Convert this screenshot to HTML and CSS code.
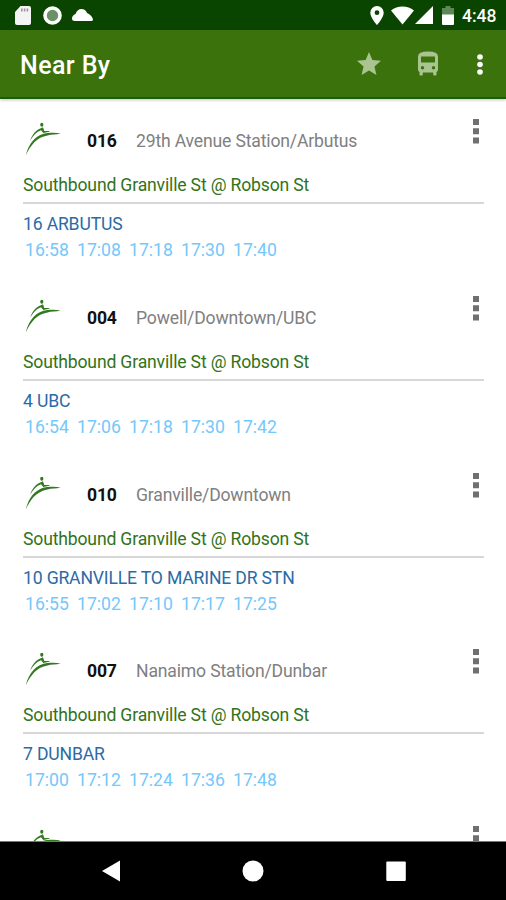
FILE: index.html
```
<!DOCTYPE html>
<html lang="en">
<head>
    <meta charset="UTF-8">
    <title>Near By</title>
    <link rel="stylesheet" href="styles.css">
</head>
<body>
    <!-- shared icons -->
    <svg class="sprite">
        <symbol id="logo" viewBox="0 0 40 40">
            <ellipse cx="17.8" cy="5.8" rx="1.6" ry="2"/>
            <path d="M6.2 21.5C8 15.8 12.3 10.8 16.8 9.2L19 8.3L20.3 12L25.6 11.9L25.2 12.8L19.3 13.9L17 11.3C12.5 13 9.4 16.3 6.2 21.5Z"/>
            <path d="M1.8 36.5C4.6 24.500 12.300 14.900 23.500 14.100C28.500 13.500 33 13.700 36.600 14.600C32 15.900 27 15.500 23.500 16.500C13 18.300 6.800 25.700 1.800 36.500Z"/>
        </symbol>
        <symbol id="dots" viewBox="0 0 6 25">
            <path d="M0 0h6v6H0zM0 9.2h6v6H0zM0 18.5h6v6H0z"/>
        </symbol>
    </svg>

    <div class="screen">
        <div class="status-bar">
            <div class="status-group">
                <svg class="icon-sd" viewBox="0 0 16 19">
                    <path d="M5.5 0H14q2 0 2 2v15q0 2-2 2H2q-2 0-2-2V6z" fill="#f4f4f4"/>
                    <path d="M6 2.5h1.6v3H6zM8.8 2.5h1.6v3H8.8zM11.6 2.5h1.6v3h-1.6z" fill="#9a9a9a"/>
                </svg>
                <svg class="icon-record" viewBox="0 0 19 19">
                    <circle cx="9.5" cy="9.5" r="7.5" fill="#6c9169" stroke="#fff" stroke-width="3.6"/>
                </svg>
                <svg class="icon-cloud" viewBox="0 0 21 12">
                    <path d="M3 12Q0 12 0 9.5Q0 6.5 3.5 5Q5.5 0 9.5 0Q13.5 0 15 4Q20 6 21 10.5Q21 12 19 12z" fill="#fff"/>
                </svg>
            </div>
            <div class="status-group">
                <svg class="icon-pin" viewBox="0 0 14 19">
                    <path d="M7 0a6.7 6.7 0 0 0-6.7 6.7C.3 11.7 7 19 7 19s6.700-7.300 6.700-12.300A6.700 6.700 0 0 0 7 0zm0 4.300a2.400 2.400 0 1 1 0 4.800a2.400 2.400 0 0 1 0-4.800z" fill="#fff" fill-rule="evenodd"/>
                </svg>
                <svg class="icon-wifi" viewBox="0 0 24 19">
                    <path d="M12 19L0 4.2Q5.2 0 12 0t12 4.2z" fill="#fff"/>
                </svg>
                <svg class="icon-signal" viewBox="0 0 18 18">
                    <path d="M18 0v18H0z" fill="#fff"/>
                </svg>
                <svg class="icon-battery" viewBox="0 0 12 19">
                    <path d="M3.5 0h5v2H12v7H0V2h3.5z" fill="#5c8756"/>
                    <path d="M0 8.5h12V18q0 1-1 1H1q-1 0-1-1z" fill="#fff"/>
                </svg>
                <span class="clock">4:48</span>
            </div>
        </div>

        <div class="app-bar">
            <h1 class="title">Near By</h1>
            <svg class="icon-star" viewBox="2 2 20 19">
                <path d="M12 17.27L18.18 21l-1.64-7.03L22 9.24l-7.19-.61L12 2 9.19 8.63 2 9.24l5.46 4.73L5.82 21z"/>
            </svg>
            <svg class="icon-bus" viewBox="0 0 22 24">
                <path fill-rule="evenodd" d="M1 5Q1 0 11 0t10 5v13q0 1.6-1.5 2.6V23q0 1-1 1h-1.3q-1 0-1-1v-2H5.8v2q0 1-1 1H3.5q-1 0-1-1v-2.4Q1 19.6 1 18zM4 5v6h14V5zM5.5 14.5a1.7 1.7 0 1 0 0 3.4a1.7 1.7 0 0 0 0-3.4zM16.5 14.5a1.7 1.7 0 1 0 0 3.4a1.7 1.7 0 0 0 0-3.4z"/>
            </svg>
            <svg class="icon-more" viewBox="0 0 6 21">
                <circle cx="3" cy="3" r="2.8"/>
                <circle cx="3" cy="10.5" r="2.8"/>
                <circle cx="3" cy="18" r="2.8"/>
            </svg>
        </div>

        <div class="list">
            <div class="card">
                <div class="card-header">
                    <svg class="logo"><use href="#logo"/></svg>
                    <span class="number">016</span>
                    <span class="name">29th Avenue Station/Arbutus</span>
                    <svg class="menu"><use href="#dots"/></svg>
                </div>
                <div class="stop">Southbound Granville St @ Robson St</div>
                <div class="route">16 ARBUTUS</div>
                <div class="times"><span>16:58</span><span>17:08</span><span>17:18</span><span>17:30</span><span>17:40</span></div>
            </div>

            <div class="card">
                <div class="card-header">
                    <svg class="logo"><use href="#logo"/></svg>
                    <span class="number">004</span>
                    <span class="name">Powell/Downtown/UBC</span>
                    <svg class="menu"><use href="#dots"/></svg>
                </div>
                <div class="stop">Southbound Granville St @ Robson St</div>
                <div class="route">4 UBC</div>
                <div class="times"><span>16:54</span><span>17:06</span><span>17:18</span><span>17:30</span><span>17:42</span></div>
            </div>

            <div class="card">
                <div class="card-header">
                    <svg class="logo"><use href="#logo"/></svg>
                    <span class="number">010</span>
                    <span class="name">Granville/Downtown</span>
                    <svg class="menu"><use href="#dots"/></svg>
                </div>
                <div class="stop">Southbound Granville St @ Robson St</div>
                <div class="route">10 GRANVILLE TO MARINE DR STN</div>
                <div class="times"><span>16:55</span><span>17:02</span><span>17:10</span><span>17:17</span><span>17:25</span></div>
            </div>

            <div class="card">
                <div class="card-header">
                    <svg class="logo"><use href="#logo"/></svg>
                    <span class="number">007</span>
                    <span class="name">Nanaimo Station/Dunbar</span>
                    <svg class="menu"><use href="#dots"/></svg>
                </div>
                <div class="stop">Southbound Granville St @ Robson St</div>
                <div class="route">7 DUNBAR</div>
                <div class="times"><span>17:00</span><span>17:12</span><span>17:24</span><span>17:36</span><span>17:48</span></div>
            </div>

            <div class="card">
                <div class="card-header">
                    <svg class="logo"><use href="#logo"/></svg>
                    <svg class="menu"><use href="#dots"/></svg>
                </div>
            </div>
        </div>

        <div class="nav-bar">
            <svg viewBox="0 0 22 22"><path d="M20 .5v21L2 11z"/></svg>
            <svg viewBox="0 0 22 22"><circle cx="11" cy="11" r="10.5"/></svg>
            <svg viewBox="0 0 22 22"><rect x="1.3" y="1.5" width="19.5" height="19.5" rx="1"/></svg>
        </div>
    </div>
</body>
</html>
```
FILE: styles.css
```
:root {
    --status-color: #0a4500;
    --bar-color: #3b720c;
    --stop-color: #32731a;
    --route-color: #2a6ba6;
    --time-color: #74c8fb;
}

body {
    font-family: Roboto, sans-serif;
    margin: 0;
    background: #fff;
}

.sprite {
    display: none;
}

.screen {
    display: flex;
    flex-direction: column;
    height: 900px;
    overflow: hidden;
}

.status-bar {
    display: flex;
    flex: none;
    justify-content: space-between;
    height: 30px;
    padding: 0 8px 0 15px;
    background: var(--status-color);
}

.status-group {
    display: flex;
    align-items: center;
}

.icon-sd {
    width: 16px;
    height: 19px;
    margin-right: 12px;
}

.icon-record {
    width: 19px;
    height: 19px;
    margin-right: 10px;
}

.icon-cloud {
    width: 21px;
    height: 12px;
    margin-bottom: 1px;
}

.icon-pin {
    width: 14px;
    height: 19px;
    margin-right: 7px;
}

.icon-wifi {
    width: 23px;
    height: 19px;
    margin-right: 1px;
}

.icon-signal {
    width: 18px;
    height: 18px;
    margin-right: 9px;
}

.icon-battery {
    width: 12px;
    height: 19px;
    margin-right: 8px;
}

.clock {
    width: 36px;
    color: #fff;
    font-size: 17.5px;
    font-weight: 500;
    line-height: 32px;
    padding-top: 2px;
}

.app-bar {
    display: flex;
    flex: none;
    align-items: center;
    box-sizing: border-box;
    height: 69px;
    padding: 0 23.5px 0 20px;
    background: var(--bar-color);
    border-bottom: 2px solid #175f0c;
    box-shadow: 0 1px 3px rgba(0,0,0,0.25);
    z-index: 1;
}

.title {
    flex: 1;
    margin: 4px 0 0;
    color: #fff;
    font-size: 25px;
    font-weight: 500;
    letter-spacing: 0.4px;
}

.icon-star {
    width: 24px;
    height: 23px;
    margin-right: 36px;
    fill: #a9c490;
}

.icon-bus {
    width: 22px;
    height: 25px;
    margin-right: 38px;
    fill: #a9c490;
}

.icon-more {
    width: 6px;
    height: 21px;
    margin-top: 2px;
    fill: #fff;
}

.list {
    flex: 1;
    min-height: 0;
    overflow: hidden;
}

.card {
    box-sizing: border-box;
    height: 176.7px;
    padding: 20px 22px 0 23px;
    font-size: 17.6px;
    line-height: 24px;
    letter-spacing: -0.17px;
    white-space: nowrap;
}

.card:first-child {
    margin-top: 0.4px;
}

.card-header {
    display: flex;
    align-items: flex-start;
    height: 54px;
}

.logo {
    width: 40px;
    height: 40px;
    margin: 0 23px 0 1px;
    fill: #33791f;
}

.number {
    width: 49px;
    margin-top: 10px;
    color: #111;
    font-weight: 700;
}

.name {
    margin-top: 10px;
    color: #808080;
}

.menu {
    width: 6px;
    height: 25px;
    margin-left: auto;
    margin-right: 5px;
    fill: #707070;
}

.stop {
    height: 29px;
    color: var(--stop-color);
    border-bottom: 2px solid #d7d7d7;
}

.route {
    margin-top: 8px;
    color: var(--route-color);
}

.times {
    display: flex;
    margin: 2px 0 0 2px;
    color: var(--time-color);
    letter-spacing: 0;
}

.times span {
    width: 52px;
}

.nav-bar {
    display: flex;
    flex: none;
    justify-content: center;
    align-items: center;
    box-sizing: border-box;
    gap: 120.5px;
    height: 59px;
    background: #000;
    border-top: 1px solid #777;
}

.nav-bar svg {
    width: 22px;
    height: 22px;
    fill: #fff;
}
```
